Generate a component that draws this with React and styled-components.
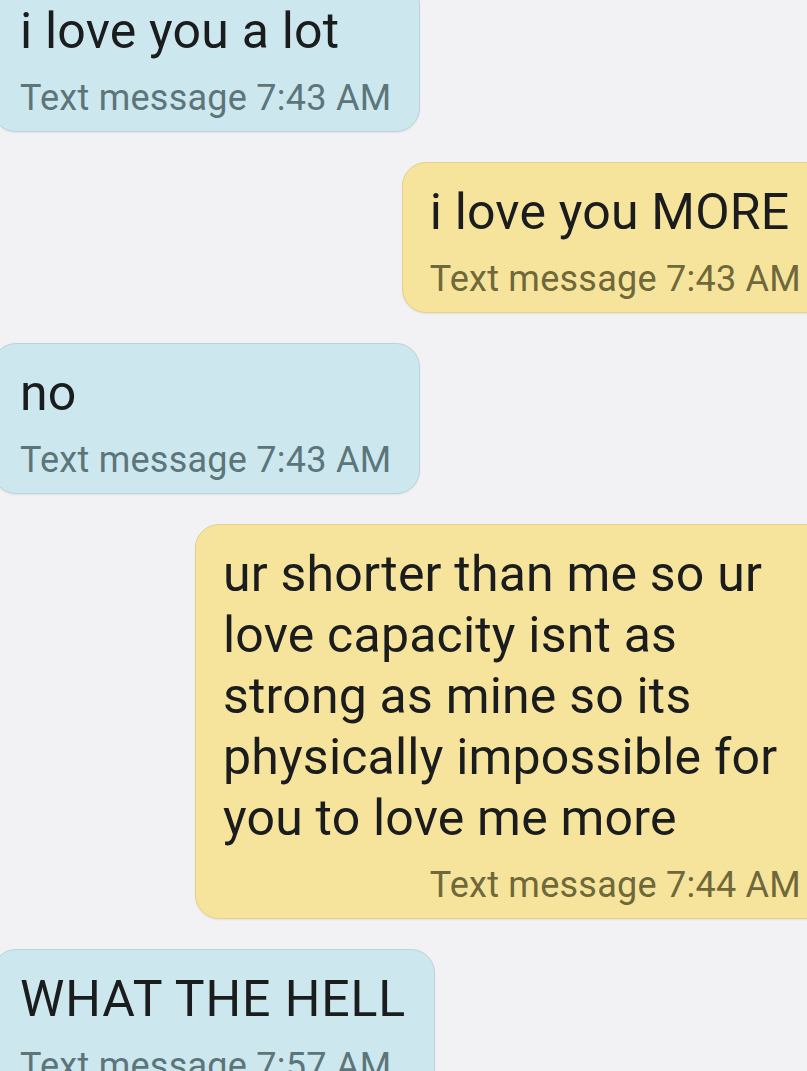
import React from "react";
import styled, { createGlobalStyle } from "styled-components";

const Global = createGlobalStyle`
  html, body {
    margin: 0;
    padding: 0;
    background: #f2f2f4;
    overflow: hidden;
  }
  body {
    font-family: Roboto, "Noto Sans", "Liberation Sans", sans-serif;
  }
`;

const Thread = styled.div`
  display: flex;
  flex-direction: column;
  gap: 30px;
  margin: -19px -23px 0 -8px;
  height: 1090px;
`;

const Bubble = styled.div`
  box-sizing: border-box;
  align-self: ${(p) => (p.$out ? "flex-end" : "flex-start")};
  max-width: 635px;
  padding: 19px 28px 11px 27px;
  border-radius: 24px;
  background: ${(p) => (p.$out ? "#f7e49c" : "#cce8ee")};
  border: 1px solid ${(p) => (p.$out ? "#e6d188" : "#b9d5db")};
  box-shadow: 0 1px 2px rgba(0, 0, 0, 0.07);
  display: flex;
  flex-direction: column;
`;

const Body = styled.div`
  font-size: 50px;
  line-height: 61px;
  letter-spacing: ${(p) => (p.$caps ? "0.9px" : "0.2px")};
  color: #1a1c1d;
`;

const Stamp = styled.div`
  margin-top: 14px;
  font-size: 36px;
  line-height: 44px;
  letter-spacing: 0.25px;
  white-space: nowrap;
  align-self: ${(p) => (p.$out ? "flex-end" : "flex-start")};
  color: ${(p) => (p.$out ? "#6e683a" : "#5c757a")};
`;

const messages = [
  { out: false, text: "i love you a lot", time: "7:43 AM" },
  { out: true, text: "i love you MORE", time: "7:43 AM" },
  { out: false, text: "no", time: "7:43 AM" },
  {
    out: true,
    text: "ur shorter than me so ur love capacity isnt as strong as mine so its physically impossible for you to love me more",
    time: "7:44 AM",
  },
  { out: false, text: "WHAT THE HELL", time: "7:57 AM", caps: true },
];

export default function App() {
  return (
    <>
      <Global />
      <Thread>
        {messages.map((m, i) => (
          <Bubble key={i} $out={m.out}>
            <Body $caps={m.caps}>{m.text}</Body>
            <Stamp $out={m.out}>Text message {m.time}</Stamp>
          </Bubble>
        ))}
      </Thread>
    </>
  );
}
